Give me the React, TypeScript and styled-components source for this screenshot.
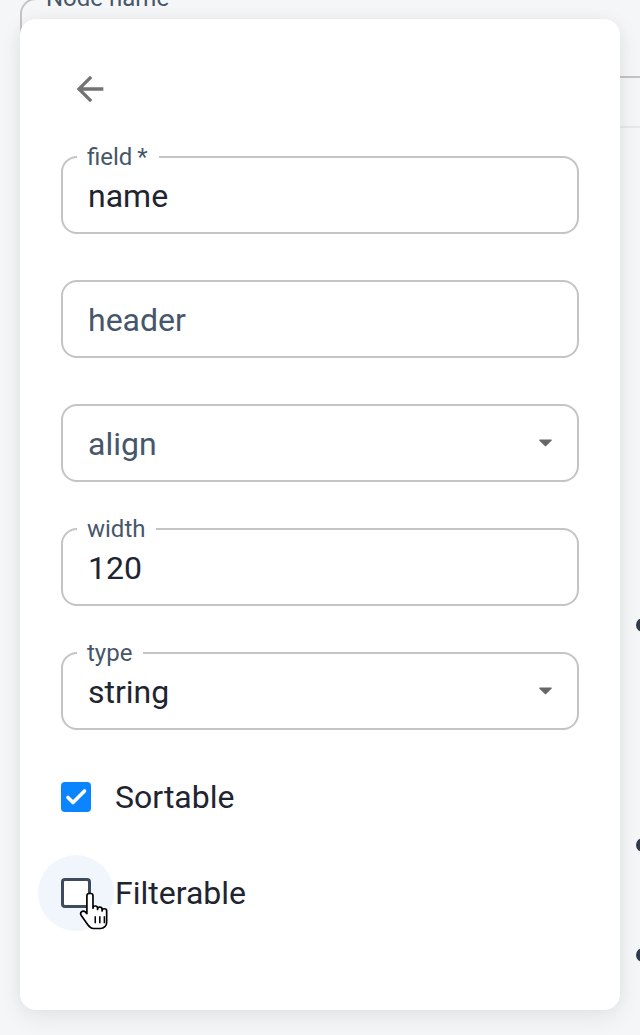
import React from "react";
import styled, { createGlobalStyle } from "styled-components";

const Global = createGlobalStyle`
  html, body {
    margin: 0;
    padding: 0;
    background: #f5f6f7;
    font-family: Roboto, "Liberation Sans", Arial, sans-serif;
  }
  * { box-sizing: border-box; }
`;

const Page = styled.div`
  position: relative;
  width: 640px;
  height: 1035px;
  overflow: hidden;
  background: #f5f6f7;
`;

/* ---------- page behind the popover ---------- */
const BgField = styled.div`
  position: relative;
  margin: -2px 0 0 20px;
  width: 660px;
  height: 80px;
  border: 2px solid #c4c4c4;
  border-radius: 16px;
`;

const BgLabel = styled.span`
  position: absolute;
  top: -14px;
  left: 14px;
  padding: 0 10px;
  background: #f5f6f7;
  font-size: 24px;
  line-height: 24px;
  color: #46566b;
`;

const BgDivider = styled.div`
  margin: 48px 0 0 20px;
  height: 2px;
  background: #e7e8ea;
`;

const BgDot = styled.div<{ $gap: number }>`
  margin: ${(p) => p.$gap}px 0 0 636px;
  width: 14px;
  height: 14px;
  border-radius: 50%;
  background: #2f3b4c;
`;

/* ---------- popover card ---------- */
const Card = styled.div`
  position: absolute;
  top: 19px;
  left: 20px;
  width: 600px;
  height: 991px;
  padding: 50px 41px 0;
  background: #ffffff;
  border-radius: 16px;
  box-shadow: 0 8px 24px rgba(15, 23, 42, 0.07), 0 0 14px rgba(15, 23, 42, 0.04);
  display: flex;
  flex-direction: column;
`;

const BackButton = styled.button`
  width: 40px;
  height: 40px;
  margin-left: 9px;
  padding: 0;
  border: none;
  background: transparent;
  display: flex;
  align-items: center;
  justify-content: center;
  color: #737373;
  cursor: pointer;
`;

const Form = styled.div`
  margin-top: 47px;
  display: flex;
  flex-direction: column;
  gap: 46px;
`;

const Field = styled.div`
  position: relative;
  height: 78px;
  padding: 0 25px;
  border: 2px solid #c4c4c4;
  border-radius: 16px;
  display: flex;
  align-items: center;
`;

const FieldLabel = styled.span`
  position: absolute;
  top: -13px;
  left: 14px;
  padding: 0 11px 0 10px;
  background: #ffffff;
  font-size: 24px;
  line-height: 24px;
  color: #46566b;
  white-space: nowrap;
`;

const FieldValue = styled.span<{ $placeholder?: boolean }>`
  font-size: 32px;
  line-height: 40px;
  padding-top: 2px;
  color: ${(p) => (p.$placeholder ? "#46566b" : "#1e2430")};
`;

const DropArrow = styled.svg`
  margin-left: auto;
  width: 13px;
  height: 8px;
  fill: #666666;
`;

const Checks = styled.div`
  margin-top: 29px;
  display: flex;
  flex-direction: column;
  gap: 20px;
`;

const CheckRow = styled.label`
  height: 76px;
  margin-left: -23px;
  display: flex;
  align-items: center;
  cursor: pointer;
`;

const CheckHit = styled.span<{ $hover?: boolean }>`
  position: relative;
  width: 76px;
  height: 76px;
  border-radius: 50%;
  background: ${(p) => (p.$hover ? "#f1f6fd" : "transparent")};
  display: flex;
  align-items: center;
  justify-content: center;
`;

const Box = styled.span<{ $checked?: boolean }>`
  width: 30px;
  height: 30px;
  border-radius: 4px;
  display: flex;
  align-items: center;
  justify-content: center;
  background: ${(p) => (p.$checked ? "#0a84ff" : "#ffffff")};
  border: ${(p) => (p.$checked ? "none" : "3px solid #3e4b5d")};
`;

const CheckLabel = styled.span`
  margin-left: 1px;
  font-size: 32px;
  line-height: 40px;
  color: #1e2430;
`;

const Cursor = styled.svg`
  position: absolute;
  left: 41px;
  top: 37px;
  width: 31px;
  height: 38px;
`;

const ArrowBackIcon = () => (
  <svg width="40" height="40" viewBox="0 0 24 24" fill="currentColor">
    <path d="M20 11H7.83l5.59-5.59L12 4l-8 8 8 8 1.41-1.41L7.83 13H20v-2z" />
  </svg>
);

const Caret = () => (
  <DropArrow viewBox="0 0 13 8">
    <path d="M0.8 0.5h11.4c.6 0 .9.7.5 1.1L7.1 7.1c-.3.3-.9.3-1.2 0L.3 1.6C-.1 1.2.2.5.8.5z" />
  </DropArrow>
);

const HandCursor = () => (
  <Cursor viewBox="0 0 20 25">
    <path
      d="M6.5 1C5.7 1 5 1.7 5 2.5V14.2L3.9 13.1C3.2 12.4 2.1 12.4 1.4 13.1C0.8 13.7 0.8 14.7 1.3 15.4L5.6 21.6C6.6 23 7.7 24 9.2 24H14C16.2 24 18 22.2 18 20V12.5C18 11.7 17.3 11 16.5 11C15.7 11 15 11.7 15 12.5V11.5C15 10.7 14.3 10 13.5 10C12.7 10 12 10.7 12 11.5V10.7C12 9.9 11.3 9.2 10.5 9.2C9.7 9.2 9 9.9 9 10.7V2.5C9 1.7 8.3 1 7.5 1Z"
      fill="#ffffff"
      stroke="#000000"
      strokeWidth="1.1"
      strokeLinejoin="round"
    />
    <path d="M10.5 16v4.5M13.5 16v4.5M16.5 16v4.5" stroke="#000000" strokeWidth="1" />
  </Cursor>
);

export default function App() {
  return (
    <Page>
      <Global />
      <BgField>
        <BgLabel>Node name</BgLabel>
      </BgField>
      <BgDivider />
      <BgDot $gap={490} />
      <BgDot $gap={206} />
      <BgDot $gap={96} />

      <Card>
        <BackButton aria-label="back">
          <ArrowBackIcon />
        </BackButton>

        <Form>
          <Field>
            <FieldLabel>field{"\u2009"}*</FieldLabel>
            <FieldValue>name</FieldValue>
          </Field>
          <Field>
            <FieldValue $placeholder>header</FieldValue>
          </Field>
          <Field>
            <FieldValue $placeholder>align</FieldValue>
            <Caret />
          </Field>
          <Field>
            <FieldLabel>width</FieldLabel>
            <FieldValue>120</FieldValue>
          </Field>
          <Field>
            <FieldLabel>type</FieldLabel>
            <FieldValue>string</FieldValue>
            <Caret />
          </Field>
        </Form>

        <Checks>
          <CheckRow>
            <CheckHit>
              <Box $checked>
                <svg width="26" height="26" viewBox="0 0 26 26">
                  <path
                    d="M5 13.5l5 5L21.5 7"
                    fill="none"
                    stroke="#ffffff"
                    strokeWidth="3.6"
                    strokeLinecap="round"
                    strokeLinejoin="round"
                  />
                </svg>
              </Box>
            </CheckHit>
            <CheckLabel>Sortable</CheckLabel>
          </CheckRow>
          <CheckRow>
            <CheckHit $hover>
              <Box />
              <HandCursor />
            </CheckHit>
            <CheckLabel>Filterable</CheckLabel>
          </CheckRow>
        </Checks>
      </Card>
    </Page>
  );
}
